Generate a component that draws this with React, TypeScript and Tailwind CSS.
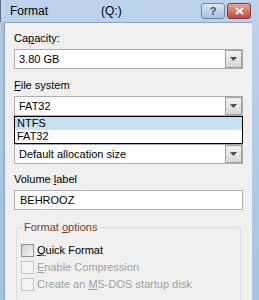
function U({ children }: { children: React.ReactNode }) {
  return <span className="underline underline-offset-[1px]">{children}</span>
}

function Arrow() {
  return (
    <div className="flex h-full w-[17px] items-center justify-center border border-[#a0a0a0] bg-gradient-to-b from-[#f2f2f2] to-[#d8d8d8]">
      <svg width="7" height="4" viewBox="0 0 7 4">
        <path d="M0 0h7L3.5 4z" fill="#4a4a4a" />
      </svg>
    </div>
  )
}

function Combo({ value }: { value: string }) {
  return (
    <div className="flex h-[20px] items-center border border-[#abadb3] bg-white pl-[4px]">
      <span className="flex-1">{value}</span>
      <Arrow />
    </div>
  )
}

function Check({ label, disabled }: { label: React.ReactNode; disabled?: boolean }) {
  return (
    <div className={`flex h-[17px] items-center gap-[3px] ${disabled ? 'text-[#a0a0a0]' : 'text-black'}`}>
      <div
        className={`h-[13px] w-[13px] border ${
          disabled ? 'border-[#c6c6c6] bg-[#f4f4f4]' : 'border-[#8f8f8f] bg-gradient-to-br from-[#d0d0d0] to-[#f4f4f4]'
        }`}
      />
      <span>{label}</span>
    </div>
  )
}

export default function App() {
  return (
    <div
      className="flex h-[300px] w-[259px] flex-col overflow-hidden bg-gradient-to-b from-[#bcd3ec] to-[#a7c2e0] text-[11px] leading-[15px] text-black"
      style={{ fontFamily: '"Liberation Sans", Arial, sans-serif' }}
    >
      <div className="flex h-[22px] shrink-0 items-center border-l border-[#5d6f85] pl-[9px] text-[12px]">
        <span className="w-[91px]">Format</span>
        <span>(Q:)</span>
        <div className="ml-auto mr-[8px] flex gap-[2px]">
          <div className="flex h-[16px] w-[24px] items-center justify-center rounded-[3px] border border-[#6d86a6] bg-gradient-to-b from-[#dbe7f4] to-[#a9c0db] text-[11px] font-bold text-[#3c4f68]">
            ?
          </div>
          <div className="flex h-[16px] w-[24px] items-center justify-center rounded-[3px] border border-[#7e3a34] bg-gradient-to-b from-[#e8a598] to-[#c3473a]">
            <svg width="9" height="8" viewBox="0 0 9 8">
              <path d="M1 1l7 6M8 1L1 7" stroke="white" strokeWidth="2" />
            </svg>
          </div>
        </div>
      </div>
      <div className="ml-[1px] mr-[7px] flex flex-1 border-l-[3px] border-[#a7c2e0]">
        <div className="flex flex-1 flex-col border-l border-t border-[#8da2bb] bg-[#f0f0f0] px-[9px] pt-[8px]">
          <div>
            Ca<U>p</U>acity:
          </div>
          <div className="mt-[3px]">
            <Combo value="3.80 GB" />
          </div>
          <div className="mt-[9px]">
            <U>F</U>ile system
          </div>
          <div className="mt-[3px]">
            <Combo value="FAT32" />
          </div>
          <div className="border border-black bg-white">
            <div className="h-[13px] bg-[#c6e2f2] pl-[2px] leading-[13px]">NTFS</div>
            <div className="h-[13px] pl-[2px] leading-[13px]">FAT32</div>
          </div>
          <Combo value="Default allocation size" />
          <div className="mt-[8px]">
            Volume <U>l</U>abel
          </div>
          <div className="mt-[3px] flex h-[20px] items-center border border-[#abadb3] bg-white pl-[5px]">BEHROOZ</div>
          <div className="relative mx-[2px] mt-[17px] flex-1 rounded-t-[3px] border border-b-0 border-[#d5dfe5] px-[4px] pt-[14px]">
            <div className="absolute -top-[8px] left-[5px] bg-[#f0f0f0] px-[2px] text-[#7a3c30]">
              Format <U>o</U>ptions
            </div>
            <Check label={<><U>Q</U>uick Format</>} />
            <Check disabled label={<><U>E</U>nable Compression</>} />
            <Check disabled label={<>Create an <U>M</U>S-DOS startup disk</>} />
          </div>
        </div>
      </div>
    </div>
  )
}
